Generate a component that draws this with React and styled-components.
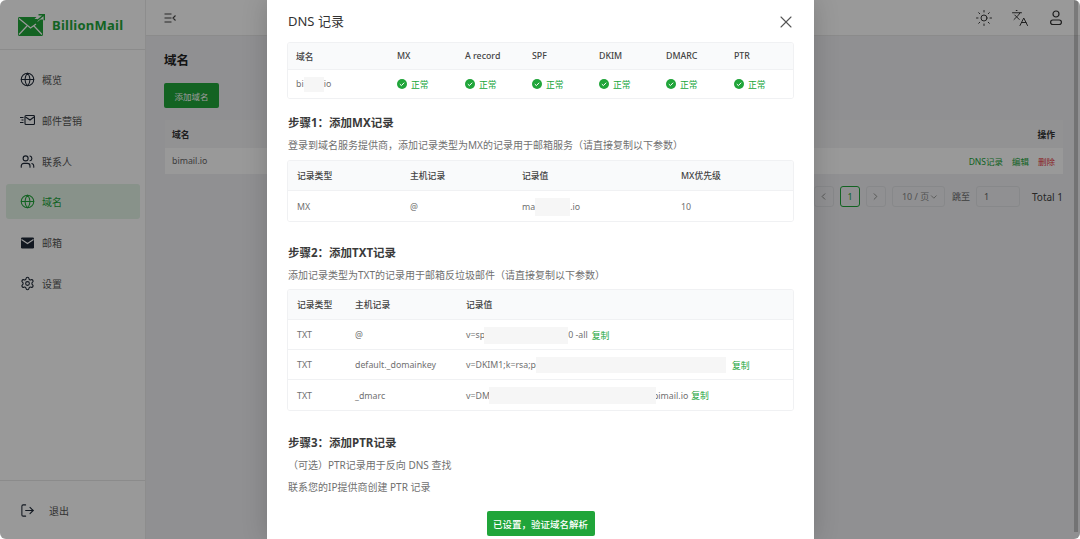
import React from 'react'
import styled, { createGlobalStyle } from 'styled-components'
import { Globe, Users, Settings, LogOut, Sun, Languages, X, ChevronLeft, ChevronRight, ChevronDown } from 'lucide-react'

const Global = createGlobalStyle`
  html, body { margin: 0; padding: 0; height: 100%; overflow: hidden; background: #fff; }
  body { font-family: "Noto Sans", "Noto Sans CJK SC", sans-serif; color: #333; }
  * { box-sizing: border-box; }
`

const Page = styled.div`
  position: relative;
  width: 1080px;
  height: 539px;
  display: flex;
  background: #f0f1f3;
  border-radius: 6px;
  overflow: hidden;
`

const Sidebar = styled.aside`
  width: 146px;
  flex: none;
  display: flex;
  flex-direction: column;
  background: #fff;
  border-right: 1px solid #ececec;
`

const Brand = styled.div`
  height: 50px;
  flex: none;
  display: flex;
  align-items: center;
  gap: 7px;
  padding: 0 0 0 18px;
  border-bottom: 1px solid #e8e8e8;
  color: #20a53a;
  font-weight: 700;
  font-size: 13px;
  letter-spacing: 0.25px;
`

const Nav = styled.nav`
  flex: 1;
  display: flex;
  flex-direction: column;
  gap: 5.8px;
  padding: 12px 5px 0 6px;
`

const NavItem = styled.div`
  height: 35px;
  display: flex;
  align-items: center;
  gap: 7px;
  padding-left: 14px;
  border-radius: 3px;
  font-size: 10px;
  color: ${p => (p.$active ? '#20a53a' : '#555')};
  background: ${p => (p.$active ? '#e3f3e6' : 'transparent')};
  svg { color: ${p => (p.$active ? '#20a53a' : '#1f2937')}; flex: none; }
`

const Logout = styled.div`
  height: 59px;
  flex: none;
  display: flex;
  align-items: center;
  gap: 14px;
  padding-left: 20px;
  border-top: 1px solid #e8e8e8;
  font-size: 10px;
  color: #555;
  svg { color: #1f2937; }
`

const Main = styled.main`
  flex: 1;
  min-width: 0;
  display: flex;
  flex-direction: column;
`

const Topbar = styled.header`
  height: 36px;
  flex: none;
  display: flex;
  align-items: center;
  justify-content: space-between;
  padding: 0 15px 0 18px;
  background: #fff;
  border-bottom: 1px solid #e8e8e8;
  color: #333;
`

const TopIcons = styled.div`
  display: flex;
  align-items: center;
  gap: 18px;
`

const Content = styled.div`
  padding: 16px 17px 0 18px;
`

const PageTitle = styled.h1`
  margin: 0 0 13px;
  font-size: 12.5px;
  line-height: 18px;
  font-weight: 700;
  color: #222;
`

const AddButton = styled.button`
  width: 55px;
  height: 25px;
  display: block;
  padding: 0;
  border: 0;
  border-radius: 2px;
  background: #20a53a;
  color: #fff;
  font: inherit;
  font-size: 8.5px;
`

const ListTable = styled.div`
  margin-top: 12px;
  margin-left: 1px;
  font-size: 8.8px;
`

const ListRow = styled.div`
  display: flex;
  align-items: center;
  justify-content: space-between;
  padding: 0 8px 0 7px;
  height: ${p => (p.$head ? '28px' : '26px')};
  background: ${p => (p.$head ? '#f3f4f6' : '#fff')};
  font-weight: ${p => (p.$head ? 600 : 400)};
  color: ${p => (p.$head ? '#333' : '#666')};
`

const Actions = styled.div`
  display: flex;
  gap: 9px;
  font-size: 8.5px;
`

const ActionLink = styled.span`
  color: ${p => (p.$danger ? '#e5383b' : '#20a53a')};
`

const Pager = styled.div`
  display: flex;
  align-items: center;
  justify-content: flex-end;
  margin-top: 12px;
  height: 21px;
  font-size: 9px;
  color: #666;
`

const PageBtn = styled.div`
  width: ${p => (p.$wide ? '53px' : '20px')};
  height: 21px;
  margin-right: ${p => p.$gap || 6}px;
  display: flex;
  align-items: center;
  justify-content: ${p => (p.$wide ? 'space-between' : 'center')};
  padding: ${p => (p.$wide ? '0 5px 0 9px' : '0')};
  border: 1px solid ${p => (p.$active ? '#20a53a' : '#e2e3e6')};
  border-radius: 3px;
  font-size: 9px;
  white-space: nowrap;
  color: ${p => (p.$active ? '#20a53a' : '#888')};
`

const JumpLabel = styled.span`
  margin-right: 6px;
`

const JumpInput = styled.div`
  width: 44px;
  height: 21px;
  margin-right: 12px;
  padding-left: 7px;
  display: flex;
  align-items: center;
  border: 1px solid #e2e3e6;
  border-radius: 3px;
`

const Total = styled.span`
  font-size: 10px;
  color: #444;
`

const Overlay = styled.div`
  position: absolute;
  inset: 0;
  display: flex;
  justify-content: center;
  padding-left: 1px;
  background: rgba(0, 0, 0, 0.4);
  overflow: hidden;
`

const ScrollThumb = styled.div`
  position: absolute;
  top: 0;
  right: 2px;
  width: 4px;
  height: 532px;
  background: rgba(0, 0, 0, 0.2);
`

const Modal = styled.section`
  width: 547px;
  height: 539px;
  flex: none;
  padding: 0 20px;
  background: #fff;
  color: #707070;
  box-shadow: 0 0 24px rgba(0, 0, 0, 0.18);
`

const ModalHead = styled.div`
  height: 42px;
  display: flex;
  align-items: center;
  justify-content: space-between;
  padding: 0 1px 1px 1px;
  font-size: 13px;
  color: #333;
  svg { color: #555; margin: 3px -3px 0 0; }
`

const Card = styled.div`
  border: 1px solid #f0f1f3;
  border-radius: 3px;
  font-size: 8.8px;
  overflow: hidden;
`

const Row = styled.div`
  display: grid;
  grid-template-columns: ${p => p.$cols};
  align-items: center;
  height: ${p => p.$h || 30}px;
  padding-left: ${p => p.$pad || 9}px;
  padding-top: ${p => (p.$head || p.$h ? 0 : 1)}px;
  background: ${p => (p.$head ? '#f9fafb' : '#fff')};
  color: ${p => (p.$head ? '#444' : '#707070')};
  font-weight: ${p => (p.$head ? 500 : 400)};
  border-bottom: ${p => (p.$last ? '0' : '1px solid #f0f1f3')};
`

const Cell = styled.div`
  white-space: nowrap;
  display: flex;
  align-items: center;
`

const Ok = styled.span`
  display: flex;
  align-items: center;
  gap: 4px;
  color: #20a53a;
`

const Mask = styled.span`
  position: relative;
  display: inline-block;
  flex: none;
  width: ${p => p.$w}px;
  height: ${p => p.$h || 16}px;
  margin-left: ${p => p.$ml || 0}px;
  margin-right: ${p => p.$mr || 0}px;
  background: #f6f6f6;
`

const Copy = styled.span`
  margin-left: ${p => p.$gap || 4}px;
  color: #20a53a;
`

const StepTitle = styled.h2`
  margin: ${p => p.$top}px 0 0 1px;
  font-size: 11.5px;
  line-height: 18px;
  font-weight: 700;
  color: #3a3a3a;
`

const StepText = styled.p`
  margin: ${p => p.$top ?? 5}px 0 ${p => p.$bottom ?? 7}px 1px;
  font-size: 10px;
  line-height: 15px;
  color: #707070;
`

const Footer = styled.div`
  display: flex;
  justify-content: center;
  margin-top: 16px;
`

const VerifyButton = styled.button`
  width: 108px;
  height: 25px;
  padding: 0;
  border: 0;
  border-radius: 2px;
  background: #20a53a;
  color: #fff;
  font: inherit;
  font-size: 9.5px;
  font-weight: 500;
`

function LogoMark() {
  return (
    <svg width="27" height="22" viewBox="0 0 27 22" fill="none">
      <path d="M0 4.500C0 3.700.6 3 1.400 3H18.500l-2 2h3v3l3-2.500h2.500v15c0 .8-.6 1.500-1.400 1.500H1.400C.6 22 0 21.300 0 20.500z" fill="#20a53a" />
      <path d="M1 4.500l11.500 9.500L18 10M1 20.500l8-8.500M24 20.500l-8-8.500" stroke="#fff" strokeWidth="1.200" />
      <path d="M14.500 10.500L25.500 1.200M20.500 .8h5.800v5.400" stroke="#20a53a" strokeWidth="1.500" />
    </svg>
  )
}

function CampaignIcon() {
  return (
    <svg width="15" height="12" viewBox="0 0 15 12" fill="none" stroke="#1f2937" strokeWidth="1.100">
      <rect x="5" y="1.500" width="9.500" height="9" rx="1" />
      <path d="M5.500 3l4.500 3 4-3M0 3.500h3.500M1.500 6h2M0 8.500h3.500" />
    </svg>
  )
}

function MailIcon() {
  return (
    <svg width="15" height="12" viewBox="0 0 15 12" fill="none">
      <rect x="1" y="0.500" width="13" height="11" rx="1.200" fill="#1f2937" />
      <path d="M1.500 2.500l6 4 6-4" stroke="#fff" strokeWidth="1.100" />
    </svg>
  )
}

function UserIcon() {
  return (
    <svg width="18" height="16" viewBox="0 0 18 16" fill="none" stroke="#333" strokeWidth="1.200">
      <circle cx="9" cy="4" r="3" />
      <rect x="3.600" y="10" width="10.800" height="4.500" rx="2.200" />
    </svg>
  )
}

function CollapseIcon() {
  return (
    <svg width="12" height="10" viewBox="0 0 12 10" fill="none" stroke="#444" strokeWidth="1.100">
      <path d="M0.500 1h7M0.500 5h7M0.500 9h7M11.500 2.500L9 5l2.500 2.500" />
    </svg>
  )
}

function CheckBadge() {
  return (
    <svg width="10" height="10" viewBox="0 0 10 10">
      <circle cx="5" cy="5" r="5" fill="#20a53a" />
      <path d="M2.800 5.100l1.600 1.500 2.800-2.900" fill="none" stroke="#fff" strokeWidth="1" />
    </svg>
  )
}

const menu = [
  { label: '概览', icon: <Globe size={15} strokeWidth={1.7} /> },
  { label: '邮件营销', icon: <CampaignIcon /> },
  { label: '联系人', icon: <Users size={15} strokeWidth={1.8} /> },
  { label: '域名', icon: <Globe size={15} strokeWidth={1.7} />, active: true },
  { label: '邮箱', icon: <MailIcon /> },
  { label: '设置', icon: <Settings size={15} strokeWidth={1.7} /> },
]

const statusCols = '101px 68px 67px 67px 67px 68px 1fr'
const mxCols = '113px 112px 159px 1fr'
const txtCols = '58px 111px 1fr'

export default function App() {
  return (
    <Page>
      <Global />
      <Sidebar>
        <Brand>
          <LogoMark />
          BillionMail
        </Brand>
        <Nav>
          {menu.map(m => (
            <NavItem key={m.label} $active={m.active}>
              {m.icon}
              {m.label}
            </NavItem>
          ))}
        </Nav>
        <Logout>
          <LogOut size={15} strokeWidth={1.7} />
          退出
        </Logout>
      </Sidebar>
      <Main>
        <Topbar>
          <CollapseIcon />
          <TopIcons>
            <Sun size={18} strokeWidth={1.3} />
            <Languages size={18} strokeWidth={1.3} />
            <UserIcon />
          </TopIcons>
        </Topbar>
        <Content>
          <PageTitle>域名</PageTitle>
          <AddButton>添加域名</AddButton>
          <ListTable>
            <ListRow $head>
              <span>域名</span>
              <span>操作</span>
            </ListRow>
            <ListRow>
              <span>bimail.io</span>
              <Actions>
                <ActionLink>DNS记录</ActionLink>
                <ActionLink>编辑</ActionLink>
                <ActionLink $danger>删除</ActionLink>
              </Actions>
            </ListRow>
          </ListTable>
          <Pager>
            <PageBtn><ChevronLeft size={11} /></PageBtn>
            <PageBtn $active>1</PageBtn>
            <PageBtn><ChevronRight size={11} /></PageBtn>
            <PageBtn $wide $gap={7}>10 / 页<ChevronDown size={10} /></PageBtn>
            <JumpLabel>跳至</JumpLabel>
            <JumpInput>1</JumpInput>
            <Total>Total 1</Total>
          </Pager>
        </Content>
      </Main>
      <Overlay>
        <Modal>
          <ModalHead>
            DNS 记录
            <X size={20} strokeWidth={1.3} />
          </ModalHead>
          <Card>
            <Row $head $h={27} $cols={statusCols} $pad={8}>
              <Cell>域名</Cell>
              <Cell>MX</Cell>
              <Cell>A record</Cell>
              <Cell>SPF</Cell>
              <Cell>DKIM</Cell>
              <Cell>DMARC</Cell>
              <Cell>PTR</Cell>
            </Row>
            <Row $last $h={28} $cols={statusCols} $pad={8}>
              <Cell>bi<Mask $w={20} $h={15} />io</Cell>
              {[0, 1, 2, 3, 4, 5].map(i => (
                <Cell key={i}><Ok><CheckBadge />正常</Ok></Cell>
              ))}
            </Row>
          </Card>

          <StepTitle $top={15}>步骤1：添加MX记录</StepTitle>
          <StepText $top={6}>登录到域名服务提供商，添加记录类型为MX的记录用于邮箱服务（请直接复制以下参数）</StepText>
          <Card>
            <Row $head $cols={mxCols}>
              <Cell>记录类型</Cell>
              <Cell>主机记录</Cell>
              <Cell>记录值</Cell>
              <Cell>MX优先级</Cell>
            </Row>
            <Row $last $cols={mxCols}>
              <Cell>MX</Cell>
              <Cell>@</Cell>
              <Cell>ma<Mask $w={35} $h={18} />.io</Cell>
              <Cell>10</Cell>
            </Row>
          </Card>

          <StepTitle $top={22}>步骤2：添加TXT记录</StepTitle>
          <StepText $top={6} $bottom={6}>添加记录类型为TXT的记录用于邮箱反垃圾邮件（请直接复制以下参数）</StepText>
          <Card>
            <Row $head $cols={txtCols}>
              <Cell>记录类型</Cell>
              <Cell>主机记录</Cell>
              <Cell>记录值</Cell>
            </Row>
            <Row $cols={txtCols}>
              <Cell>TXT</Cell>
              <Cell>@</Cell>
              <Cell>v=sp<Mask $w={84} $h={17} $ml={-1} />0 -all<Copy>复制</Copy></Cell>
            </Row>
            <Row $cols={txtCols}>
              <Cell>TXT</Cell>
              <Cell>default._domainkey</Cell>
              <Cell>v=DKIM1;k=rsa;p=<Mask $w={190} $ml={-5} /><Copy $gap={6}>复制</Copy></Cell>
            </Row>
            <Row $last $cols={txtCols}>
              <Cell>TXT</Cell>
              <Cell>_dmarc</Cell>
              <Cell>v=DM<Mask $w={167} $h={17} $ml={-1} $mr={-3} />bimail.io<Copy $gap={3}>复制</Copy></Cell>
            </Row>
          </Card>

          <StepTitle $top={23}>步骤3：添加PTR记录</StepTitle>
          <StepText $top={6}>（可选）PTR记录用于反向 DNS 查找</StepText>
          <StepText $top={0} $bottom={0}>联系您的IP提供商创建 PTR 记录</StepText>
          <Footer>
            <VerifyButton>已设置，验证域名解析</VerifyButton>
          </Footer>
        </Modal>
        <ScrollThumb />
      </Overlay>
    </Page>
  )
}
